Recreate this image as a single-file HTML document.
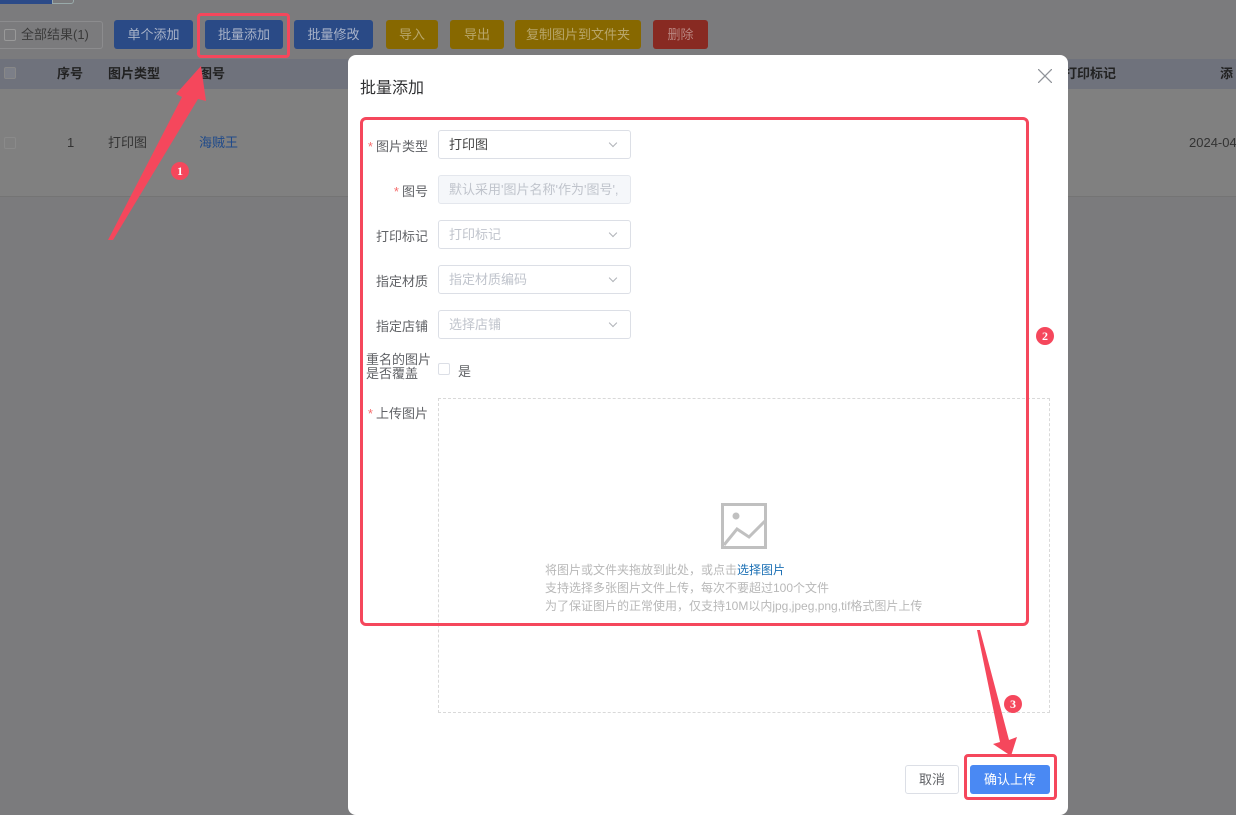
<!DOCTYPE html>
<html><head><meta charset="utf-8"><style>
*{margin:0;padding:0;box-sizing:border-box}
body{width:1236px;height:804px;overflow:hidden;position:relative;background:#7b7b7d;font-family:"Liberation Sans","Noto Sans CJK SC",sans-serif;font-size:13px;color:#333;white-space:nowrap}
.a{position:absolute}
.btn{position:absolute;top:20px;height:29px;border-radius:3px;color:#a9b3c8;font-size:13px;text-align:center;line-height:29px}
.lbl{position:absolute;width:90px;left:338px;text-align:right;font-size:13px;color:#606266}
.lbl i{color:#f56c6c;font-style:normal;margin-right:3px}
.inp{position:absolute;left:438px;width:193px;height:29px;border:1px solid #dcdfe6;border-radius:3px;padding-left:10px;line-height:27px;font-size:13px;color:#c0c4cc}
.arr{position:absolute;right:14px;top:9px;width:6px;height:6px;border-right:1px solid #b0b3b8;border-bottom:1px solid #b0b3b8;transform:rotate(45deg)}
.badge{position:absolute;width:18px;height:18px;border-radius:50%;background:#f5475c;color:#fff;font-family:"Liberation Serif",serif;font-weight:bold;font-size:12px;text-align:center;line-height:18px}
</style></head><body>
<div class="a" style="left:0;top:0;width:52px;height:4px;background:#2b4a88"></div>
<div class="a" style="left:52px;top:-3px;width:22px;height:7px;border:1px solid #9aa;border-radius:0 0 3px 0"></div>
<div class="a" style="left:-3px;top:21px;width:106px;height:28px;border:1px solid #8c8c8e;border-radius:3px;color:#3a3a3a;line-height:26px;padding-left:6px"><span style="display:inline-block;width:12px;height:12px;border:1px solid #999;border-radius:2px;vertical-align:-2px;margin-right:5px"></span>全部结果(1)</div>
<div class="btn" style="left:114px;width:79px;background:#2a4a86">单个添加</div>
<div class="btn" style="left:205px;width:78px;background:#2a4a86">批量添加</div>
<div class="btn" style="left:294px;width:79px;background:#2a4a86">批量修改</div>
<div class="btn" style="left:386px;width:52px;background:#876800;color:#b8a66a">导入</div>
<div class="btn" style="left:450px;width:54px;background:#876800;color:#b8a66a">导出</div>
<div class="btn" style="left:515px;width:126px;background:#876800;color:#b8a66a">复制图片到文件夹</div>
<div class="btn" style="left:653px;width:55px;background:#882a22;color:#b98680">删除</div>
<div class="a" style="left:197px;top:13px;width:93px;height:45px;border:3px solid #f5475c;border-radius:4px"></div>
<div class="a" style="left:0;top:59px;width:1236px;height:30px;background:#6f727c;color:#222;font-weight:bold;line-height:30px">
<span class="a" style="left:4px;top:8px;width:12px;height:12px;border:1px solid #888;background:#7c7f88;border-radius:2px"></span>
<span class="a" style="left:57px">序号</span><span class="a" style="left:108px">图片类型</span><span class="a" style="left:199px">图号</span><span class="a" style="left:1064px">打印标记</span><span class="a" style="left:1220px">添</span></div>
<div class="a" style="left:0;top:89px;width:1236px;height:108px;background:#808080;border-bottom:1px solid #747474;color:#333;line-height:108px">
<span class="a" style="left:4px;top:48px;width:12px;height:12px;border:1px solid #8a8a8a;border-radius:2px"></span>
<span class="a" style="left:67px">1</span><span class="a" style="left:108px">打印图</span><span class="a" style="left:199px;color:#1f4a8a">海贼王</span><span class="a" style="left:1189px">2024-04</span></div>

<div class="a" style="left:348px;top:55px;width:720px;height:760px;background:#fff;border-radius:8px">
<div class="a" style="left:12px;top:19px;font-size:16px;color:#303133">批量添加</div>
<svg class="a" style="left:690px;top:14px" width="14" height="14"><path d="M0 0L14 14M14 0L0 14" stroke="#909399" stroke-width="1.3"/></svg>
</div>
<div class="lbl" style="top:136px"><i>*</i>图片类型</div>
<div class="inp" style="top:130px;color:#444">打印图<span class="arr"></span></div>
<div class="lbl" style="top:181px"><i>*</i>图号</div>
<div class="inp" style="top:175px;background:#f5f7fa;border-color:#e4e7ed">默认采用'图片名称'作为'图号',</div>
<div class="lbl" style="top:226px">打印标记</div>
<div class="inp" style="top:220px">打印标记<span class="arr"></span></div>
<div class="lbl" style="top:271px">指定材质</div>
<div class="inp" style="top:265px">指定材质编码<span class="arr"></span></div>
<div class="lbl" style="top:316px">指定店铺</div>
<div class="inp" style="top:310px">选择店铺<span class="arr"></span></div>
<div class="a" style="left:366px;top:353px;font-size:13px;line-height:14px;color:#606266">重名的图片<br>是否覆盖</div>
<div class="a" style="left:438px;top:363px;width:12px;height:12px;border:1px solid #dcdfe6;border-radius:2px"></div>
<div class="a" style="left:458px;top:361px;color:#606266">是</div>
<div class="lbl" style="top:403px"><i>*</i>上传图片</div>
<div class="a" style="left:438px;top:398px;width:612px;height:315px;border:1px dashed #d9d9d9"></div>
<svg class="a" style="left:721px;top:503px" width="46" height="46" viewBox="0 0 46 46"><rect x="1.5" y="1.5" width="43" height="43" fill="none" stroke="#c0c0c0" stroke-width="3"/><circle cx="15" cy="13" r="3.5" fill="#c0c0c0"/><path d="M3 42 L16 26 L28 34 L44 18" fill="none" stroke="#c0c0c0" stroke-width="3"/></svg>
<div class="a" style="left:438px;width:612px;top:561px;text-align:left;padding-left:107px;font-size:12px;line-height:18px;color:#b8b8b8">将图片或文件夹拖放到此处，或点击<span style="color:#1a6fb4">选择图片</span><br>支持选择多张图片文件上传，每次不要超过100个文件<br>为了保证图片的正常使用，仅支持10M以内jpg,jpeg,png,tif格式图片上传</div>
<div class="a" style="left:360px;top:117px;width:669px;height:509px;border:3px solid #f5475c;border-radius:6px"></div>
<div class="a" style="left:905px;top:765px;width:54px;height:29px;border:1px solid #dcdfe6;border-radius:3px;text-align:center;line-height:27px;color:#606266">取消</div>
<div class="a" style="left:970px;top:765px;width:80px;height:29px;background:#4a89f3;border-radius:3px;text-align:center;line-height:29px;color:#fff">确认上传</div>
<div class="a" style="left:964px;top:754px;width:93px;height:46px;border:3px solid #f5475c;border-radius:4px"></div>
<svg class="a" style="left:0;top:0" width="1236" height="804"><path d="M108 240 L182 97 L176 94 L201 66 L206 101 L198 99 L113 240 Z" fill="#f5475c"/><path d="M977 630 L1000 742 L993 744 L1011 756 L1017 737 L1009 740 L980 630 Z" fill="#f5475c"/></svg>
<div class="badge" style="left:171px;top:162px">1</div>
<div class="badge" style="left:1036px;top:327px">2</div>
<div class="badge" style="left:1004px;top:695px">3</div>
</body></html>
